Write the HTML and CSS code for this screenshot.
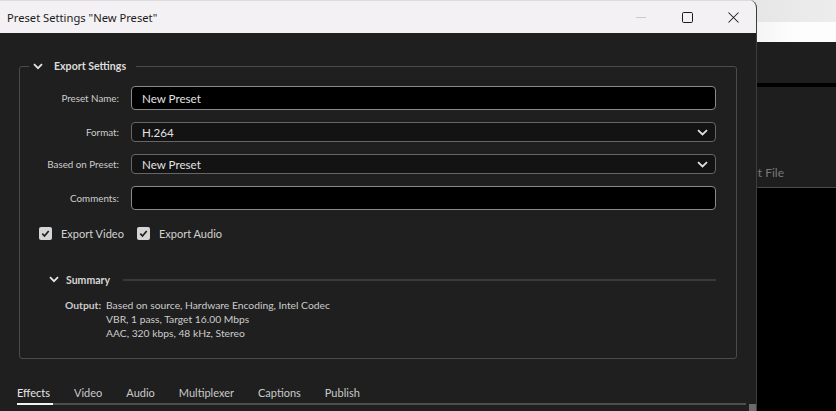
FILE: index.html
```html
<!DOCTYPE html>
<html>
<head>
<meta charset="utf-8">
<link rel="stylesheet" href="styles.css">
</head>
<body>
<div class="desktop">
  <div class="backdrop">
    <div class="bd-top"></div>
    <div class="bd-white"></div>
    <div class="bd-dark"></div>
    <div class="bd-sep"></div>
    <div class="bd-panel"><span class="bd-text">Output File</span></div>
    <div class="bd-line"></div>
    <div class="bd-rest"></div>
  </div>
  <div class="dialog">
    <div class="titlebar">
      <span class="title">Preset Settings "New Preset"</span>
      <div class="controls">
        <span class="ctl"><svg width="10" height="10" viewBox="0 0 10 10"><path d="M0 5.5 H10" stroke="#c9c9c9" stroke-width="1"/></svg></span>
        <span class="ctl"><svg width="11" height="11" viewBox="0 0 11 11"><rect x="0.5" y="0.5" width="10" height="10" rx="1.2" fill="none" stroke="#1b1b1b" stroke-width="1"/></svg></span>
        <span class="ctl"><svg width="11" height="11" viewBox="0 0 11 11"><path d="M0.5 0.5 L10.5 10.5 M10.5 0.5 L0.5 10.5" stroke="#1b1b1b" stroke-width="1.05" fill="none"/></svg></span>
      </div>
    </div>
    <div class="content">
      <fieldset class="group">
        <legend class="legend">
          <svg class="chev" width="10" height="7" viewBox="0 0 10 7"><path d="M1 1.2 L5 5.2 L9 1.2" stroke="#e4e4e4" stroke-width="1.8" fill="none"/></svg>
          <span>Export Settings</span>
        </legend>
        <div class="form">
          <label class="lbl">Preset Name:</label>
          <div class="field field-text field-tall">New Preset</div>
          <label class="lbl">Format:</label>
          <div class="field field-select">H.264<svg class="sel-chev" width="11" height="7" viewBox="0 0 11 7"><path d="M1 1.2 L5.5 5.5 L10 1.2" stroke="#e0e0e0" stroke-width="1.8" fill="none"/></svg></div>
          <label class="lbl">Based on Preset:</label>
          <div class="field field-select">New Preset<svg class="sel-chev" width="11" height="7" viewBox="0 0 11 7"><path d="M1 1.2 L5.5 5.5 L10 1.2" stroke="#e0e0e0" stroke-width="1.8" fill="none"/></svg></div>
          <label class="lbl">Comments:</label>
          <div class="field field-text field-tall"></div>
        </div>
        <div class="checks">
          <span class="check"><svg width="13" height="13" viewBox="0 0 13 13"><rect x="0" y="0" width="13" height="13" rx="2" fill="#d5d5d5"/><path d="M3.3 6.7 L5.5 9 L9.7 4" stroke="#1f1f1f" stroke-width="1.7" fill="none"/></svg><span>Export Video</span></span>
          <span class="check"><svg width="13" height="13" viewBox="0 0 13 13"><rect x="0" y="0" width="13" height="13" rx="2" fill="#d5d5d5"/><path d="M3.3 6.7 L5.5 9 L9.7 4" stroke="#1f1f1f" stroke-width="1.7" fill="none"/></svg><span>Export Audio</span></span>
        </div>
        <div class="summary-head">
          <svg class="chev" width="10" height="7" viewBox="0 0 10 7"><path d="M1 1.2 L5 5.2 L9 1.2" stroke="#e4e4e4" stroke-width="1.8" fill="none"/></svg>
          <span class="summary-title">Summary</span>
          <span class="rule"></span>
        </div>
        <div class="output">
          <span class="out-label">Output:</span>
          <div class="out-lines">
            <div>Based on source, Hardware Encoding, Intel Codec</div>
            <div>VBR, 1 pass, Target 16.00 Mbps</div>
            <div>AAC, 320 kbps, 48 kHz, Stereo</div>
          </div>
        </div>
      </fieldset>
      <div class="tabs">
        <span class="tab active">Effects</span>
        <span class="tab">Video</span>
        <span class="tab">Audio</span>
        <span class="tab">Multiplexer</span>
        <span class="tab">Captions</span>
        <span class="tab">Publish</span>
      </div>
    </div>
    <div class="scroll-thumb"></div>
  </div>
</div>
</body>
</html>
```

FILE: styles.css
```css
html, body {
  margin: 0;
  padding: 0;
  background: #000;
}
.desktop {
  position: relative;
  width: 836px;
  height: 411px;
  overflow: hidden;
}
.dialog {
  position: absolute;
  left: 0;
  top: 0;
  width: 756px;
  height: 411px;
  background: #1f1f1f;
  border-right: 1px solid #3d3d3d;
  border-top-right-radius: 8px;
  overflow: hidden;
  display: flex;
  flex-direction: column;
  font-family: "Lato", "Liberation Sans", sans-serif;
}
.titlebar {
  flex: none;
  height: 32px;
  border-top: 1px solid #dcdcdc;
  background: #f3f1f3;
  display: flex;
  align-items: center;
  padding-left: 7px;
}
.title {
  font-family: "Noto Sans", "Liberation Sans", sans-serif;
  font-size: 11.2px;
  color: #1b1b1b;
}
.controls {
  margin-left: auto;
  display: flex;
  height: 32px;
}
.ctl {
  width: 46px;
  height: 32px;
  display: flex;
  align-items: center;
  justify-content: center;
}
.content {
  padding: 26px 19px 0 19px;
}
.group {
  margin: 0;
  width: 718px;
  box-sizing: border-box;
  border: 1px solid #4b4b4b;
  border-radius: 3px;
  padding: 0 20px 18px 0;
  min-inline-size: 0;
}
.legend {
  margin-left: 9px;
  padding: 0 10px 0 4px;
  height: 14px;
  display: flex;
  align-items: center;
  gap: 11px;
  font-size: 10.6px;
  font-weight: 700;
  color: #dcdcdc;
}
.chev {
  display: block;
}
.form {
  display: grid;
  grid-template-columns: 99px 1fr;
  column-gap: 12px;
  row-gap: 12px;
  margin-top: 13px;
  align-items: center;
}
.lbl {
  text-align: right;
  font-size: 9.8px;
  color: #cdcdcd;
}
.field {
  box-sizing: border-box;
  height: 20px;
  border-radius: 4px;
  display: flex;
  align-items: center;
  padding-left: 10px;
  font-size: 11.6px;
  color: #e2e2e2;
}
.field-tall {
  height: 24px;
}
.field-text {
  background: #000;
  border: 1px solid #8a8a8a;
}
.field-select {
  background: #131313;
  border: 1px solid #666;
  padding-right: 7px;
}
.sel-chev {
  margin-left: auto;
}
.checks {
  display: flex;
  margin: 17px 0 0 19px;
  height: 13px;
  align-items: center;
}
.check {
  display: flex;
  align-items: center;
  gap: 9px;
  font-size: 11px;
  color: #d2d2d2;
  margin-right: 13px;
}
.check svg {
  display: block;
}
.summary-head {
  display: flex;
  align-items: center;
  height: 15px;
  margin: 32px 0 0 29px;
}
.summary-title {
  margin-left: 7px;
  font-size: 10.5px;
  font-weight: 700;
  color: #d6d6d6;
}
.rule {
  flex: 1;
  height: 2px;
  background: #3a3a3a;
  margin-left: 13px;
}
.output {
  display: flex;
  margin: 11px 0 0 45px;
  font-size: 10.3px;
  line-height: 14px;
  color: #cccccc;
}
.out-label {
  font-weight: 700;
  margin-right: 5px;
}
.tabs {
  display: flex;
  gap: 24px;
  margin: 26px -9px 0 -2px;
  border-bottom: 2px solid #4e4e4e;
  font-size: 11px;
  line-height: 16px;
  color: #cacaca;
}
.tab {
  position: relative;
  padding-bottom: 2px;
}
.tab.active {
  color: #e6e6e6;
}
.tab.active::after {
  content: "";
  position: absolute;
  left: 0;
  right: -3px;
  bottom: -2px;
  height: 2px;
  background: #f2f2f2;
}
.scroll-thumb {
  position: absolute;
  left: 749px;
  top: 404px;
  width: 8px;
  height: 8px;
  background: #6b6b6b;
}
.backdrop {
  width: 836px;
  height: 411px;
  display: flex;
  flex-direction: column;
}
.bd-top {
  height: 22px;
  background: linear-gradient(90deg, #e4e4e4 88%, #ededed);
}
.bd-white {
  height: 20px;
  background: linear-gradient(90deg, #f0f0f0 88%, #fdfdfd 95%);
}
.bd-dark {
  height: 41px;
  background: #1e1e1e;
}
.bd-sep {
  height: 4px;
  background: #000;
}
.bd-panel {
  height: 100px;
  background: #1e1e1e;
  display: flex;
  align-items: flex-end;
  justify-content: flex-end;
  padding: 0 52px 6px 0;
  box-sizing: border-box;
}
.bd-text {
  white-space: nowrap;
  font-family: "Lato", "Liberation Sans", sans-serif;
  font-size: 12px;
  line-height: 16px;
  color: #7a7a7a;
}
.bd-line {
  height: 1px;
  background: #4a4a4a;
}
.bd-rest {
  flex: 1;
  background: #000;
}
```
